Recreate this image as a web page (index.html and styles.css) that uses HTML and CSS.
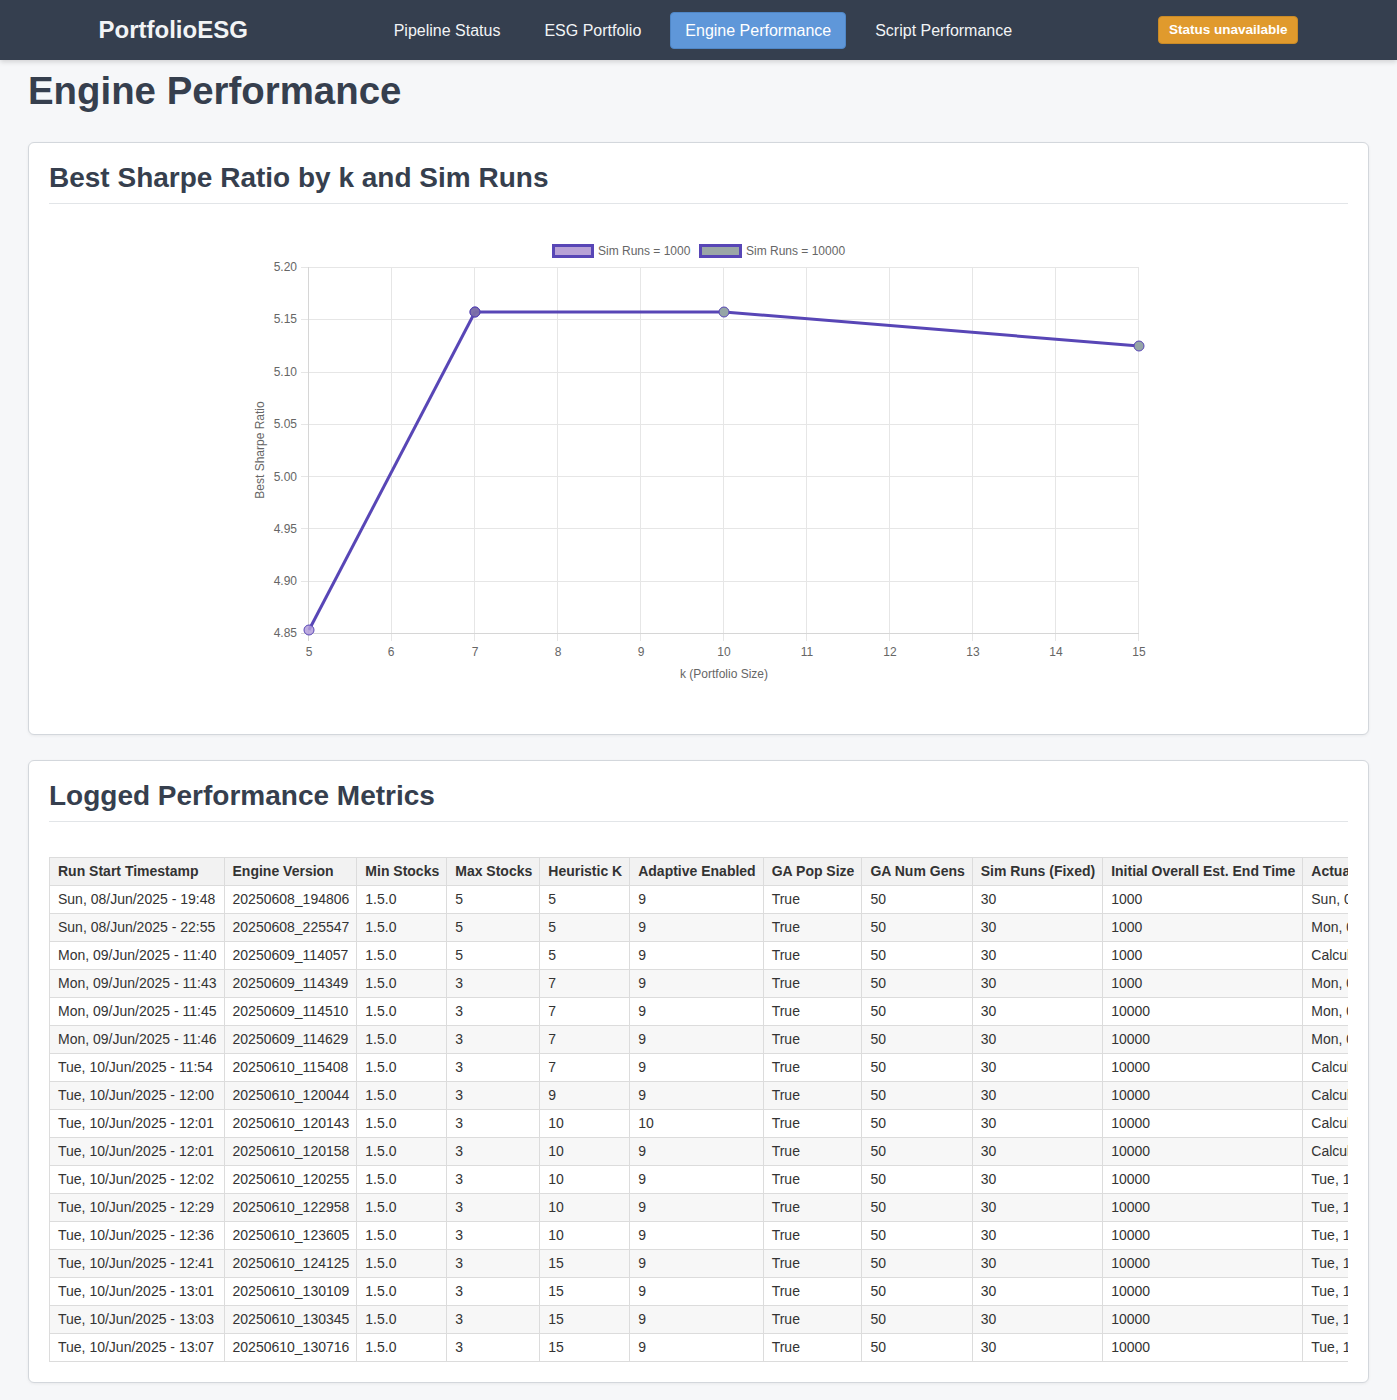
FILE: index.html
```html
<!DOCTYPE html>
<html lang="en">
<head>
<meta charset="utf-8">
<title>Engine Performance - PortfolioESG</title>
<link rel="stylesheet" href="styles.css">
</head>
<body>
<nav class="navbar">
  <div class="nav-inner">
    <div class="brand">PortfolioESG</div>
    <ul class="nav-links">
      <li><a class="nav-link" href="#">Pipeline Status</a></li>
      <li><a class="nav-link" href="#">ESG Portfolio</a></li>
      <li><a class="nav-link active" href="#">Engine Performance</a></li>
      <li><a class="nav-link" href="#">Script Performance</a></li>
    </ul>
    <span class="status-badge">Status unavailable</span>
  </div>
</nav>

<main class="main">
  <h1 class="page-title">Engine Performance</h1>

  <section class="card">
    <h2 class="card-title">Best Sharpe Ratio by k and Sim Runs</h2>
    <div class="chart-wrap">
      <svg class="chart" width="1299" height="490" viewBox="49 224 1299 490" xmlns="http://www.w3.org/2000/svg">
        <!-- legend -->
        <rect x="553.5" y="244.5" width="39" height="11" fill="#b8a2d6" stroke="#5846b6" stroke-width="3"/>
        <text class="ch-text" x="598" y="254">Sim Runs = 1000</text>
        <rect x="700.5" y="244.5" width="40" height="11" fill="#9ba7a6" stroke="#5846b6" stroke-width="3"/>
        <text class="ch-text" x="746" y="254">Sim Runs = 10000</text>

        <!-- horizontal grid -->
        <g stroke="#e6e6e6" stroke-width="1">
          <line x1="301" y1="266.5" x2="1139" y2="266.5"/>
          <line x1="301" y1="318.5" x2="1139" y2="318.5"/>
          <line x1="301" y1="371.5" x2="1139" y2="371.5"/>
          <line x1="301" y1="423.5" x2="1139" y2="423.5"/>
          <line x1="301" y1="475.5" x2="1139" y2="475.5"/>
          <line x1="301" y1="527.5" x2="1139" y2="527.5"/>
          <line x1="301" y1="580.5" x2="1139" y2="580.5"/>
        </g>
        <!-- vertical grid -->
        <g stroke="#e6e6e6" stroke-width="1">
          <line x1="391.5" y1="266" x2="391.5" y2="640"/>
          <line x1="474.5" y1="266" x2="474.5" y2="640"/>
          <line x1="557.5" y1="266" x2="557.5" y2="640"/>
          <line x1="640.5" y1="266" x2="640.5" y2="640"/>
          <line x1="723.5" y1="266" x2="723.5" y2="640"/>
          <line x1="806.5" y1="266" x2="806.5" y2="640"/>
          <line x1="889.5" y1="266" x2="889.5" y2="640"/>
          <line x1="972.5" y1="266" x2="972.5" y2="640"/>
          <line x1="1055.5" y1="266" x2="1055.5" y2="640"/>
          <line x1="1138.5" y1="266" x2="1138.5" y2="640"/>
        </g>
        <!-- axes -->
        <g stroke="#d6d6d6" stroke-width="1">
          <line x1="308.5" y1="266" x2="308.5" y2="640"/>
          <line x1="301" y1="632.5" x2="1139" y2="632.5"/>
        </g>

        <!-- y tick labels -->
        <g class="ch-text" text-anchor="end">
          <text x="297" y="270">5.20</text>
          <text x="297" y="322">5.15</text>
          <text x="297" y="375">5.10</text>
          <text x="297" y="427">5.05</text>
          <text x="297" y="480">5.00</text>
          <text x="297" y="532">4.95</text>
          <text x="297" y="584">4.90</text>
          <text x="297" y="636">4.85</text>
        </g>
        <!-- x tick labels -->
        <g class="ch-text" text-anchor="middle">
          <text x="309" y="655">5</text>
          <text x="391" y="655">6</text>
          <text x="475" y="655">7</text>
          <text x="558" y="655">8</text>
          <text x="641" y="655">9</text>
          <text x="724" y="655">10</text>
          <text x="807" y="655">11</text>
          <text x="890" y="655">12</text>
          <text x="973" y="655">13</text>
          <text x="1056" y="655">14</text>
          <text x="1139" y="655">15</text>
        </g>
        <text class="ch-text" x="724" y="677" text-anchor="middle">k (Portfolio Size)</text>
        <text class="ch-text" x="264" y="449" text-anchor="middle" transform="rotate(-90 264 449)">Best Sharpe Ratio</text>

        <!-- data lines -->
        <polyline points="309,629 475,311" fill="none" stroke="#5846b6" stroke-width="3" stroke-linejoin="round"/>
        <polyline points="475,311 724,311 1139,345" fill="none" stroke="#5846b6" stroke-width="3" stroke-linejoin="round"/>
        <!-- points -->
        <circle cx="309" cy="629" r="5" fill="#b39ddb" fill-opacity="0.85" stroke="#5846b6" stroke-width="1"/>
        <circle cx="475" cy="311" r="5" fill="#b39ddb" fill-opacity="0.85" stroke="#5846b6" stroke-width="1"/>
        <circle cx="475" cy="311" r="5" fill="#6a5f98" fill-opacity="0.75" stroke="#5846b6" stroke-width="1"/>
        <circle cx="724" cy="311" r="5" fill="#95a5a6" stroke="#5846b6" stroke-width="1"/>
        <circle cx="1139" cy="345" r="5" fill="#95a5a6" stroke="#5846b6" stroke-width="1"/>
      </svg>
    </div>
  </section>

  <section class="card">
    <h2 class="card-title">Logged Performance Metrics</h2>
    <div class="table-wrap">
      <table class="metrics">
        <thead>
          <tr>
            <th>Run Start Timestamp</th>
            <th>Engine Version</th>
            <th>Min Stocks</th>
            <th>Max Stocks</th>
            <th>Heuristic K</th>
            <th>Adaptive Enabled</th>
            <th>GA Pop Size</th>
            <th>GA Num Gens</th>
            <th>Sim Runs (Fixed)</th>
            <th>Initial Overall Est. End Time</th>
            <th>Actual Overall End Time</th>
            <th>Best Sharpe Ratio</th>
          </tr>
        </thead>
        <tbody>
          <tr><td>Sun, 08/Jun/2025 - 19:48</td><td>20250608_194806</td><td>1.5.0</td><td>5</td><td>5</td><td>9</td><td>True</td><td>50</td><td>30</td><td>1000</td><td>Sun, 08/Jun/2025 - 19:52</td><td>4.8530</td></tr>
          <tr><td>Sun, 08/Jun/2025 - 22:55</td><td>20250608_225547</td><td>1.5.0</td><td>5</td><td>5</td><td>9</td><td>True</td><td>50</td><td>30</td><td>1000</td><td>Mon, 09/Jun/2025 - 00:12</td><td>4.8530</td></tr>
          <tr><td>Mon, 09/Jun/2025 - 11:40</td><td>20250609_114057</td><td>1.5.0</td><td>5</td><td>5</td><td>9</td><td>True</td><td>50</td><td>30</td><td>1000</td><td>Calculating...</td><td>4.8530</td></tr>
          <tr><td>Mon, 09/Jun/2025 - 11:43</td><td>20250609_114349</td><td>1.5.0</td><td>3</td><td>7</td><td>9</td><td>True</td><td>50</td><td>30</td><td>1000</td><td>Mon, 09/Jun/2025 - 11:44</td><td>5.1570</td></tr>
          <tr><td>Mon, 09/Jun/2025 - 11:45</td><td>20250609_114510</td><td>1.5.0</td><td>3</td><td>7</td><td>9</td><td>True</td><td>50</td><td>30</td><td>10000</td><td>Mon, 09/Jun/2025 - 11:45</td><td>5.1570</td></tr>
          <tr><td>Mon, 09/Jun/2025 - 11:46</td><td>20250609_114629</td><td>1.5.0</td><td>3</td><td>7</td><td>9</td><td>True</td><td>50</td><td>30</td><td>10000</td><td>Mon, 09/Jun/2025 - 11:50</td><td>5.1570</td></tr>
          <tr><td>Tue, 10/Jun/2025 - 11:54</td><td>20250610_115408</td><td>1.5.0</td><td>3</td><td>7</td><td>9</td><td>True</td><td>50</td><td>30</td><td>10000</td><td>Calculating...</td><td>5.1570</td></tr>
          <tr><td>Tue, 10/Jun/2025 - 12:00</td><td>20250610_120044</td><td>1.5.0</td><td>3</td><td>9</td><td>9</td><td>True</td><td>50</td><td>30</td><td>10000</td><td>Calculating...</td><td>5.1570</td></tr>
          <tr><td>Tue, 10/Jun/2025 - 12:01</td><td>20250610_120143</td><td>1.5.0</td><td>3</td><td>10</td><td>10</td><td>True</td><td>50</td><td>30</td><td>10000</td><td>Calculating...</td><td>5.1570</td></tr>
          <tr><td>Tue, 10/Jun/2025 - 12:01</td><td>20250610_120158</td><td>1.5.0</td><td>3</td><td>10</td><td>9</td><td>True</td><td>50</td><td>30</td><td>10000</td><td>Calculating...</td><td>5.1570</td></tr>
          <tr><td>Tue, 10/Jun/2025 - 12:02</td><td>20250610_120255</td><td>1.5.0</td><td>3</td><td>10</td><td>9</td><td>True</td><td>50</td><td>30</td><td>10000</td><td>Tue, 10/Jun/2025 - 12:05</td><td>5.1570</td></tr>
          <tr><td>Tue, 10/Jun/2025 - 12:29</td><td>20250610_122958</td><td>1.5.0</td><td>3</td><td>10</td><td>9</td><td>True</td><td>50</td><td>30</td><td>10000</td><td>Tue, 10/Jun/2025 - 12:33</td><td>5.1570</td></tr>
          <tr><td>Tue, 10/Jun/2025 - 12:36</td><td>20250610_123605</td><td>1.5.0</td><td>3</td><td>10</td><td>9</td><td>True</td><td>50</td><td>30</td><td>10000</td><td>Tue, 10/Jun/2025 - 12:39</td><td>5.1570</td></tr>
          <tr><td>Tue, 10/Jun/2025 - 12:41</td><td>20250610_124125</td><td>1.5.0</td><td>3</td><td>15</td><td>9</td><td>True</td><td>50</td><td>30</td><td>10000</td><td>Tue, 10/Jun/2025 - 12:47</td><td>5.1244</td></tr>
          <tr><td>Tue, 10/Jun/2025 - 13:01</td><td>20250610_130109</td><td>1.5.0</td><td>3</td><td>15</td><td>9</td><td>True</td><td>50</td><td>30</td><td>10000</td><td>Tue, 10/Jun/2025 - 13:02</td><td>5.1244</td></tr>
          <tr><td>Tue, 10/Jun/2025 - 13:03</td><td>20250610_130345</td><td>1.5.0</td><td>3</td><td>15</td><td>9</td><td>True</td><td>50</td><td>30</td><td>10000</td><td>Tue, 10/Jun/2025 - 13:05</td><td>5.1244</td></tr>
          <tr><td>Tue, 10/Jun/2025 - 13:07</td><td>20250610_130716</td><td>1.5.0</td><td>3</td><td>15</td><td>9</td><td>True</td><td>50</td><td>30</td><td>10000</td><td>Tue, 10/Jun/2025 - 13:10</td><td>5.1244</td></tr>
        </tbody>
      </table>
    </div>
  </section>
</main>
</body>
</html>
```

FILE: styles.css
```css
* {
  box-sizing: border-box;
}

html, body {
  margin: 0;
  padding: 0;
}

body {
  font-family: "Liberation Sans", Arial, Helvetica, sans-serif;
  background: #f6f7f9;
  color: #333;
}

/* ---------- Navbar ---------- */
.navbar {
  background: #353f4f;
  height: 60px;
  box-shadow: 0 2px 5px rgba(0, 0, 0, 0.15);
}

.nav-inner {
  max-width: 1200px;
  height: 60px;
  margin: 0 auto;
  display: flex;
  align-items: center;
  justify-content: space-between;
}

.brand {
  color: #f2f4f6;
  font-size: 24px;
  font-weight: bold;
}

.nav-links {
  list-style: none;
  margin: 0;
  padding: 0;
  display: flex;
  gap: 14px;
}

.nav-link {
  display: block;
  padding: 8px 14px;
  font-size: 16px;
  line-height: 19px;
  color: #f2f4f6;
  text-decoration: none;
  border-radius: 4px;
  border: 1px solid transparent;
}

.nav-link.active {
  background: #5f97d9;
  border-color: #4f86c6;
  color: #fff;
}

.status-badge {
  background: #e09a2d;
  color: #fff;
  font-size: 13.5px;
  font-weight: bold;
  line-height: 16px;
  padding: 5px 10px;
  border-radius: 4px;
  border: 1px solid #c98a26;
}

/* ---------- Main ---------- */
.main {
  padding: 8px 28px 10px;
}

.page-title {
  margin: 0 0 28px;
  font-size: 38.4px;
  line-height: 46px;
  color: #363f4e;
}

.card {
  background: #fff;
  border: 1px solid #d3d7dc;
  border-radius: 6px;
  padding: 18px 20px 20px;
  margin-bottom: 25px;
  box-shadow: 0 1px 3px rgba(0, 0, 0, 0.06);
}

.card:last-child {
  margin-bottom: 0;
}

.card-title {
  margin: 0 0 21px;
  font-size: 28px;
  line-height: 34px;
  padding-bottom: 8px;
  border-bottom: 1px solid #e2e5e8;
  color: #363f4e;
}

/* ---------- Chart ---------- */
.chart-wrap {
  height: 489px;
}

.chart {
  display: block;
}

.ch-text {
  font-family: "Liberation Sans", Arial, Helvetica, sans-serif;
  font-size: 12px;
  fill: #666;
}

/* ---------- Table ---------- */
.table-wrap {
  margin-top: 35px;
  overflow-x: auto;
  scrollbar-width: none;
}

.metrics {
  border-collapse: collapse;
  font-size: 14px;
  white-space: nowrap;
}

.metrics th,
.metrics td {
  border: 1px solid #dcdcdc;
  padding: 5px 7px 5px 8px;
  line-height: 17px;
  text-align: left;
  color: #333;
}

.metrics th {
  background: #f2f2f2;
  font-weight: bold;
}

.metrics tbody tr:nth-child(even) td {
  background: #f7f7f7;
}
```
